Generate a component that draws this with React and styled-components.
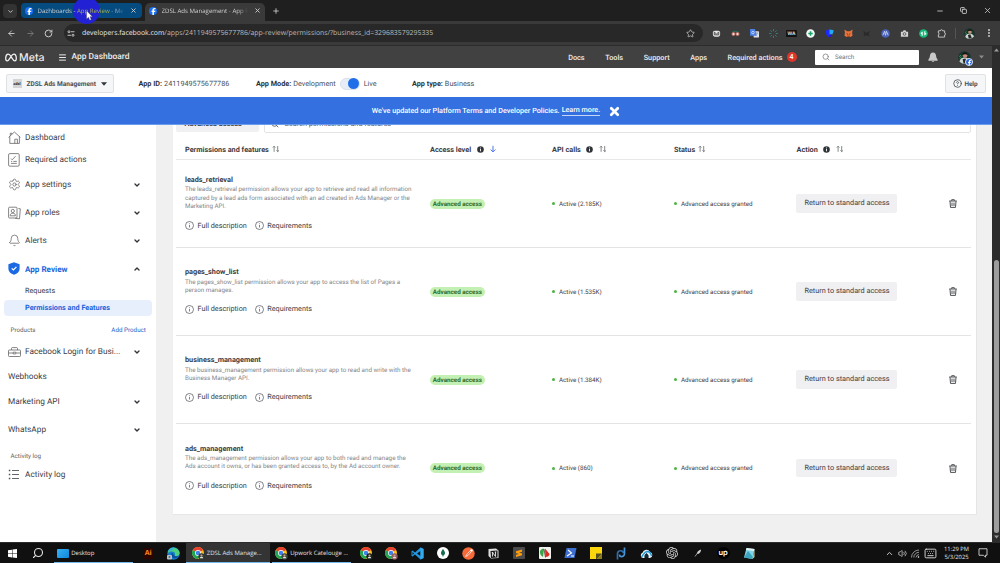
import React from 'react';
import styled, { createGlobalStyle, css } from 'styled-components';
import {
    ArrowLeft, ArrowRight, RotateCw, Star, Plus, X, Minus, Copy, Search, ChevronDown, ChevronUp,
    Volume2, Keyboard, CircleHelp, MoreVertical, Menu, Settings, Bell,
} from 'lucide-react';
import { SiOpenai } from 'react-icons/si';
import { FaFacebookF } from 'react-icons/fa6';

const permissions = [
    { name: 'leads_retrieval', text: 'The leads_retrieval permission allows your app to retrieve and read all information captured by a lead ads form associated with an ad created in Ads Manager or the Marketing API.', calls: '2.185K' },
    { name: 'pages_show_list', text: 'The pages_show_list permission allows your app to access the list of Pages a person manages.', calls: '1.535K' },
    { name: 'business_management', text: 'The business_management permission allows your app to read and write with the Business Manager API.', calls: '1.384K' },
    { name: 'ads_management', text: 'The ads_management permission allows your app to both read and manage the Ads account it owns, or has been granted access to, by the Ad account owner.', calls: '860' },
];

/* ---------- icons ---------- */

const MetaLogo = () => (
    <svg width="12" height="9" viewBox="0 0 24 17" fill="none" stroke="#f4f4f4" strokeWidth="2.5">
        <path d="M12 6.500C10 3 8.500 1.600 6.600 1.600 3.400 1.600 1.400 6 1.400 10.500c0 3 1.100 4.600 3.100 4.600 2.600 0 4.200-3.500 7.500-8.600 1.700-2.800 3.300-4.900 5.600-4.900 3 0 5 4.400 5 8.900 0 3-1.100 4.600-3.100 4.600-2.600 0-4.200-3.500-7.500-8.600z" />
    </svg>
);

const HomeIcon = () => (
    <svg width="13" height="13" viewBox="0 0 13 13" fill="none" stroke="#666" strokeWidth="0.8">
        <path d="M.6 6.400L6.400 1l6 5.400M1.800 5.400v7h9.600v-7M2.300 4.700V2.200h1.500v1.100M6.800 12.400V8.200h2.600v4.200" />
    </svg>
);

const ToolboxIcon = () => (
    <svg width="13" height="10" viewBox="0 0 13 10" fill="none" stroke="#666" strokeWidth="0.8">
        <rect x=".5" y="3" width="12" height="6.500" rx=".8" />
        <path d="M3.500 3V1.400c0-.5.300-.8.800-.8h4.400c.5 0 .8.300.8.800V3M.5 6h4.700M7.800 6h4.700M5.200 5.200h2.600v1.700H5.200z" />
    </svg>
);

const LogIcon = () => (
    <svg width="12" height="11" viewBox="0 0 12 11" fill="none" stroke="#555" strokeWidth="0.9">
        <path d="M4 1.500h7M4 5.500h7M4 9.500h7" />
        <path d="M.8 1.500h1.500M.8 5.500h1.500M.8 9.500h1.500" strokeWidth="1.400" />
    </svg>
);

const ChecklistIcon = () => (
    <svg width="12" height="14" viewBox="0 0 12 14" fill="none" stroke="#666" strokeWidth="0.8">
        <rect x="0.6" y="0.6" width="10.600" height="12.600" rx="1.200" />
        <path d="M3 5.600l1.200 1.200L7.600 3.200M3 8.400h1.200M5.400 8.400h3.400M3 10.400h5.800" />
    </svg>
);

const RolesIcon = () => (
    <svg width="13" height="14" viewBox="0 0 13 14" fill="none" stroke="#666" strokeWidth="0.8">
        <rect x="0.6" y="1.2" width="8.4" height="10.8" rx="1" />
        <circle cx="4.8" cy="5" r="1.6" />
        <path d="M2.2 9.8c0-1.8 1-2.600 2.600-2.600s2.600.8 2.600 2.600zM10.400 2.400l1.900.4-.8 10-4.400-.5" />
    </svg>
);

const ShieldIcon = () => (
    <svg width="12" height="13" viewBox="0 0 12 13">
        <path d="M6 .3l5.600 2v4.400c0 3-2.200 5-5.600 6.100C2.600 11.700.4 9.700.4 6.700V2.300z" fill="#1b6ae4" />
        <path d="M3.700 6.300l1.700 1.700 3-3.200" fill="none" stroke="#fff" strokeWidth="1.200" />
    </svg>
);

const SortIcon = () => (
    <svg width="8" height="8" viewBox="0 0 8 8" fill="none" stroke="#66696d" strokeWidth="0.8">
        <path d="M2.100 6.800V1.300M.8 2.500l1.300-1.300 1.300 1.300M5.700 1v5.600M4.400 5.400l1.300 1.300L7 5.400" />
    </svg>
);

const InfoDot = () => (
    <svg width="7" height="7" viewBox="0 0 7 7">
        <circle cx="3.500" cy="3.500" r="3.300" fill="#303338" />
        <path d="M3.500 3v2.300M3.500 1.500v.9" stroke="#fff" strokeWidth="0.9" />
    </svg>
);

const InfoRing = () => (
    <svg width="9" height="9" viewBox="0 0 9 9" fill="none" stroke="#4b4f56" strokeWidth="0.7">
        <circle cx="4.500" cy="4.500" r="4" />
        <path d="M4.500 4v2.500M4.500 2.400v.8" />
    </svg>
);

const DownArrow = () => (
    <svg width="6" height="8" viewBox="0 0 6 8" fill="none" stroke="#4a76e8" strokeWidth="1">
        <path d="M3 .8v6M.6 4.500L3 6.900l2.400-2.400" />
    </svg>
);

const TrashIcon = () => (
    <svg width="8" height="9" viewBox="0 0 8 9" fill="none" stroke="#3a3d41" strokeWidth="0.9">
        <path d="M.2 2h7.600M2.700 1.800V.7h2.600v1.100M1 2.200l.5 6.200h5L7 2.200M3 3.600v3.400M5 3.600v3.400" />
    </svg>
);

const Caret = ({ color, size = 7 }) => (
    <svg width={size} height="4" viewBox="0 0 7 4"><path d="M0 0h7L3.500 4z" fill={color} /></svg>
);

const BellSolid = () => (
    <svg width="10" height="10" viewBox="0 0 10 10">
        <path d="M5 .4c2 0 3 1.500 3.100 3.700.1 1.700.8 2.600 1.500 3.600v1H.4v-1c.7-1 1.400-1.900 1.500-3.600C2 1.900 3 .4 5 .4z" fill="#c9c9c9" />
        <path d="M3.600 9h2.800l-.6.8H4.200z" fill="#c9c9c9" />
    </svg>
);

const Portrait = ({ size }) => (
    <svg width={size} height={size} viewBox="0 0 14 14">
        <circle cx="7" cy="7" r="6.800" fill="#17352a" />
        <path d="M1.500 11c1-3 3-4 5.500-4s5 1.500 5.800 3.500C11 13 9 13.800 7 13.800S3 13 1.500 11z" fill="#c9d6d0" />
        <path d="M5 9l3-1 2 5-4 .5z" fill="#2a2527" />
        <circle cx="7.600" cy="4.800" r="2.500" fill="#c48b76" />
        <path d="M4.800 4.600C4.800 2 6.400 1.400 8 1.600s2.500 1.400 2.100 2.800C8.600 3.300 6.600 3.300 4.800 4.600z" fill="#1a1314" />
        <path d="M1.500 6.200l1.500-2M2 8.200l1.600-2" stroke="#35b56f" strokeWidth="0.9" />
    </svg>
);

const ChromeIcon = ({ badge }) => (
    <svg width="13" height="13" viewBox="0 0 26 26">
        <circle cx="12" cy="12" r="12" fill="#fbc116" />
        <path d="M1.600 6A12 12 0 0 0 12 24l5.200-9L12 12z" fill="#21a456" />
        <path d="M12 12L1.600 6A12 12 0 0 1 22.400 6L17 9z" fill="#e8402f" />
        <circle cx="12" cy="12" r="5.800" fill="#fff" />
        <circle cx="12" cy="12" r="4.500" fill="#3f80ec" />
        <circle cx="19" cy="19" r="6.300" fill={badge} />
        <circle cx="19" cy="17" r="2.200" fill="#c99a87" />
        <path d="M15.500 22.500c.5-2.500 2-3 3.500-3s3 .5 3.500 3z" fill="#e9e4e2" />
    </svg>
);

const EdgeIcon = () => (
    <svg width="13" height="13" viewBox="0 0 26 26">
        <circle cx="13" cy="13" r="12.500" fill="#1580cf" />
        <path d="M2 9C5-1 21-2 25 10c1 5-2 8-6 8-3 0-4-1-3-3 1-4-3-7-7-6-3 0-5 1-7 3z" fill="#4dcf7e" />
        <path d="M2 9C4 2 10 0 15 1c-2 5-7 7-13 8z" fill="#38b6d6" />
        <path d="M10 11c-3 4-1 10 5 12 4 0 7-2 9-5-4 2-9 1-11-3z" fill="#0c4f9c" />
        <rect x="0" y="16" width="10" height="9" rx="2" fill="#b9c2c9" />
        <circle cx="5" cy="20" r="2" fill="#5e6a74" />
    </svg>
);

const WindowsIcon = () => (
    <svg width="9" height="9" viewBox="0 0 18 18" fill="#fff">
        <path d="M0 2.500L8 1.400v7.200H0zM9 1.200L18 0v8.600H9zM0 9.600h8v7.200L0 15.700zM9 9.600h9V18l-9-1.200z" />
    </svg>
);

const VscodeIcon = () => (
    <svg width="13" height="13" viewBox="0 0 26 26">
        <path d="M19 1l6 3v18l-6 3L8 15l-5 4-2-1.500v-9L3 7l5 4z" fill="#2196dd" />
        <path d="M19 8v10l-7-5zM3 10v6l3-3z" fill="#101010" />
        <path d="M19 1l6 3v18l-6 3z" fill="#35a9ef" />
    </svg>
);

const MongoIcon = () => (
    <svg width="12" height="12" viewBox="0 0 24 24">
        <circle cx="12" cy="12" r="12" fill="#fff" />
        <path d="M12 4c3 4 4 6 4 8 0 3-2 4-3.500 5.500V20h-1v-2.500C10 16 8 15 8 12c0-2 1-4 4-8z" fill="#156b4c" />
    </svg>
);

const PostmanIcon = () => (
    <svg width="13" height="13" viewBox="0 0 26 26">
        <circle cx="13" cy="13" r="12.500" fill="#f76b3b" />
        <path d="M7 19l4-6 7-7M7 19l5-2 7-8" stroke="#fff" strokeWidth="1.400" fill="none" />
        <circle cx="19" cy="7" r="2.400" fill="#fff" />
    </svg>
);

const NotionIcon = () => (
    <svg width="11" height="11" viewBox="0 0 22 22">
        <path d="M1 2l15-1 5 4v15L6 21l-5-5z" fill="#dedede" />
        <path d="M5 6l14-1v14L6 20z" fill="#1b1b1b" />
        <path d="M9 17V9l6 8V8M7.500 9h3M13.500 8h3" stroke="#e8e8e8" strokeWidth="1.800" fill="none" />
    </svg>
);

const SublimeIcon = () => (
    <svg width="12" height="12" viewBox="0 0 24 24">
        <rect width="24" height="24" rx="2" fill="#4b4b4b" />
        <path d="M6 8.500L18 5v4.500L12 11l6 2v3.500L6 20v-4.500L12 14l-6-2z" fill="#ff9d0b" />
    </svg>
);

const LeafIcon = () => (
    <svg width="12" height="12" viewBox="0 0 24 24">
        <rect width="24" height="24" rx="2" fill="#f1f1ee" />
        <path d="M2 8C5 3 9 3 10 4L8 20C3 17 1 12 2 8z" fill="#39a548" />
        <path d="M12 3l9 11c0 4-4 6-8 6z" fill="#dc2b22" />
        <path d="M10 4l3 17" stroke="#4b2a1b" strokeWidth="1.500" />
    </svg>
);

const PowershellIcon = () => (
    <svg width="13" height="12" viewBox="0 0 26 24">
        <path d="M5 2h20l-4 20H1z" fill="#3d6fd0" />
        <path d="M8 6l7 6-9 6M14 18h6" stroke="#fff" strokeWidth="2.200" fill="none" />
    </svg>
);

const StickyIcon = () => (
    <svg width="12" height="12" viewBox="0 0 24 24">
        <rect width="24" height="24" fill="#fbd60c" />
        <path d="M12 13h12L14 24h-2z" fill="#54501f" />
        <path d="M24 13v11H14z" fill="#8a7c1c" />
    </svg>
);

const LoopIcon = () => (
    <svg width="10" height="13" viewBox="0 0 20 26" fill="none" strokeWidth="3.400">
        <path d="M3 25V13a6 6 0 0 1 6-5.500c4 0 6 2.500 6 5" stroke="#2e6eae" />
        <path d="M17 1v12c0 4-3 6.500-7 6-2-.2-3-2-3-4" stroke="#4994d6" />
    </svg>
);

const CloudIcon = () => (
    <svg width="13" height="11" viewBox="0 0 26 22">
        <path d="M6 20a5.500 5.500 0 0 1-1-10.500A8 8 0 0 1 20 8a6.200 6.200 0 0 1 0 12h-3v-5l-4-5-4 5v5z" fill="#dff1fb" />
        <path d="M3 18c4-4 5-10 11-11 5 0 8 4 9 9" stroke="#2299d5" strokeWidth="2.800" fill="none" />
        <circle cx="13" cy="16" r="3.500" fill="#0e2c44" />
    </svg>
);

const FeatherIcon = () => (
    <svg width="8" height="8" viewBox="0 0 16 16">
        <path d="M2 15l5-7" stroke="#999" strokeWidth="2" />
        <path d="M6 9c0-4 3-6 8-8 0 4-2 8-6 9z" fill="#d5d5d5" />
    </svg>
);

const NotepadIcon = () => (
    <svg width="12" height="13" viewBox="0 0 24 26">
        <path d="M7 2l16 2-4 20-17-3z" fill="#7ed4e6" />
        <path d="M7 2l16 2-1 4L6 6z" fill="#e7f1f2" />
        <path d="M2 21l8-13 10 12-1 4z" fill="#3aa3bd" />
        <path d="M19 24l4-20v16z" fill="#dcc98f" />
    </svg>
);

const SignalIcon = () => (
    <svg width="9" height="9" viewBox="0 0 18 18" fill="none" stroke="#bdbdbd" strokeWidth="1.500">
        <path d="M1 17A15 15 0 0 1 16 2M5.500 17A11 11 0 0 1 16 6.500M10 17a7 7 0 0 1 6-6" />
        <circle cx="15" cy="16" r="1.500" fill="#fff" stroke="none" />
    </svg>
);

const NotificationIcon = () => (
    <svg width="10" height="10" viewBox="0 0 20 20" fill="none" stroke="#e0e0e0" strokeWidth="1.700">
        <path d="M2 1.500h16v13h-3v4l-4-4H2z" />
    </svg>
);

const PointerIcon = styled.svg`
    position: absolute;
    left: 65px;
    top: 7px;
    z-index: 4;
`;

/* browser extension buttons, drawn on a 20 x 20 grid */
const extensions = [
    <g key="mail"><rect x="2" y="4" width="16" height="13" rx="4" fill="#e8e8e8" /><path d="M5 7l5 4 5-4v6H5z" fill="none" stroke="#444" strokeWidth="2" /></g>,
    <g key="glasses"><path d="M2 7c2-4 14-4 16 0l-2 1H4z" fill="#2b6256" /><circle cx="5.500" cy="11" r="3.500" fill="#e9dfd9" stroke="#c9655c" strokeWidth="1.800" /><circle cx="14.500" cy="11" r="3.500" fill="#e9dfd9" stroke="#c9655c" strokeWidth="1.800" /></g>,
    <g key="translate"><rect x="8" y="5" width="12" height="14" rx="1" fill="#dcdfe6" /><path d="M0 0h11l4 15H0z" fill="#4a7fe6" /><circle cx="6.500" cy="8" r="2.800" fill="none" stroke="#fff" strokeWidth="1.400" /><path d="M13 9h5M15.500 8c1 3-1 5-2 6" stroke="#5a6a88" fill="none" /></g>,
    <g key="spark" stroke="#2c8c88" strokeWidth="1.800"><path d="M10 0v5M10 15v5M0 10h5M15 10h5M3 3l3.500 3.500M13.500 13.500L17 17M17 3l-3.500 3.500M3 17l3.500-3.500" /></g>,
    <g key="wa"><rect x="-2" y="2" width="24" height="16" rx="1" fill="#121212" /><text x="10" y="14" textAnchor="middle" fontSize="11" fontWeight="700" fontFamily="Liberation Sans, sans-serif" fill="#ddd">WA</text></g>,
    <g key="plus"><circle cx="10" cy="10" r="9.500" fill="#f3fbf7" /><path d="M10 5v10M5 10h10" stroke="#16a268" strokeWidth="3.500" /></g>,
    <g key="shield"><path d="M1 2c4 2 5-1 9-1v18C3 15 1 10 1 2z" fill="#1c2bff" /><path d="M10 1c4 0 5 2 9 1 0 4-1 7-3 10h-6z" fill="#25a9f0" /><path d="M10 12h6c-1 3-3 5-6 7z" fill="#2b12d8" /></g>,
    <g key="fox"><path d="M1 1l6 4h6l6-4-1 8 1 6-5 3H6l-5-3 1-6z" fill="#e8743b" /><path d="M6 10l3 2M14 10l-3 2M7 16h6" stroke="#6b2f1b" strokeWidth="2" /></g>,
    <g key="x"><path d="M3 4l5 4h4l5-4-2 8 2 4-7-2-7 2 2-4z" fill="#2a2a2b" /></g>,
    <g key="m"><circle cx="10" cy="10" r="9.500" fill="#4a62b8" /><path d="M4 14L8 5l2 9 2-9 4 9" stroke="#c8d0ee" strokeWidth="2" fill="none" /></g>,
    <g key="camera"><path d="M2 6h4l2-3h4l2 3h4v11H2z" fill="#d3d3d3" /><circle cx="10" cy="11" r="3" fill="none" stroke="#555" strokeWidth="2" /></g>,
    <g key="green"><circle cx="10" cy="10" r="9.700" fill="#18b77c" /><path d="M7 15V8l-3 2M13 5v7l3-2" stroke="#fff" strokeWidth="2.500" fill="none" /></g>,
    <g key="puzzle"><path d="M3 4h4.500a2.500 2.500 0 0 1 5 0H17v5a2 2 0 0 1 0 4v5H3v-5a2 2 0 0 0 0-4z" fill="none" stroke="#d4d4d4" strokeWidth="1.900" /></g>,
];

const navItems = [
    { label: 'Dashboard', icon: <HomeIcon />, h: 22 },
    { label: 'Required actions', icon: <ChecklistIcon />, h: 22 },
    { label: 'App settings', icon: <Settings size={13} strokeWidth={1.4} color="#666" />, h: 28, arrow: 'down' },
    { label: 'App roles', icon: <RolesIcon />, h: 28, arrow: 'down' },
    { label: 'Alerts', icon: <Bell size={13} strokeWidth={1.4} color="#666" />, h: 28, arrow: 'down' },
    { label: 'App Review', icon: <ShieldIcon />, h: 28, arrow: 'up', active: true },
];

const productItems = [
    { label: 'Facebook Login for Busi...', icon: <ToolboxIcon />, h: 22, arrow: 'down' },
    { label: 'Webhooks', h: 28 },
    { label: 'Marketing API', h: 22, arrow: 'down' },
    { label: 'WhatsApp', h: 34, arrow: 'down' },
];

const SideLink = ({ item }) => (
    <SideItem $h={item.h} $active={item.active}>
        {item.icon && <SideIcon>{item.icon}</SideIcon>}
        <span>{item.label}</span>
        {item.arrow && (
            <SideArrow>
                {item.arrow === 'up'
                    ? <ChevronUp size={8} strokeWidth={4} />
                    : <ChevronDown size={8} strokeWidth={4} />}
            </SideArrow>
        )}
    </SideItem>
);

const App = () => {
    return (
        <>
            <GlobalStyle />
            <Screen>
                <TabBar>
                    <TabSearch><ChevronDown size={7} strokeWidth={3} /></TabSearch>
                    <Tab $hovered>
                        <PointerHalo />
                        <Favicon><FaFacebookF size={7} /></Favicon>
                        <TabTitle>Dazhboards - <Tinted>App Review</Tinted> - Me</TabTitle>
                        <X size={7} strokeWidth={3} />
                        <PointerIcon width="7" height="11" viewBox="0 0 12 18">
                            <path d="M1 1v14l3.300-3 2.200 5 2.500-1-2.200-5H11z" fill="#fff" stroke="#444" strokeWidth="0.6" />
                        </PointerIcon>
                    </Tab>
                    <Tab>
                        <Favicon><FaFacebookF size={7} /></Favicon>
                        <TabTitle>ZDSL Ads Management - App R</TabTitle>
                        <X size={7} strokeWidth={3} />
                    </Tab>
                    <NewTab><Plus size={8} strokeWidth={2.500} /></NewTab>
                    <WindowControls>
                        <Minus size={8} strokeWidth={2.500} />
                        <Copy size={7} strokeWidth={3} />
                        <X size={9} strokeWidth={2} />
                    </WindowControls>
                </TabBar>
                <Toolbar>
                    <NavButtons>
                        <ArrowLeft size={9} strokeWidth={2.400} color="#ccc" />
                        <ArrowRight size={9} strokeWidth={2.400} color="#777" />
                        <RotateCw size={9} strokeWidth={2.600} color="#ccc" />
                    </NavButtons>
                    <UrlBar>
                        <svg width="8" height="7" viewBox="0 0 16 14" fill="none" stroke="#cfcfcf" strokeWidth="1.800">
                            <circle cx="4" cy="3.500" r="2" /><path d="M8 3.500h7M1 10.500h7" /><circle cx="12" cy="10.500" r="2" />
                        </svg>
                        <UrlText><b>developers.facebook.com</b>/apps/2411949575677786/app-review/permissions/?business_id=329683579295335</UrlText>
                        <Star size={9} strokeWidth={2.200} />
                    </UrlBar>
                    <Extensions>
                        {extensions.map((art) => (
                            <svg key={art.key} width="9" height="9" viewBox="0 0 20 20" overflow="visible">{art}</svg>
                        ))}
                    </Extensions>
                    <ProfileArea>
                        <Portrait size={11} />
                        <MoreVertical size={10} strokeWidth={3} color="#c8c8c8" />
                    </ProfileArea>
                </Toolbar>

                <Viewport>
                    <Site>
                        <Header>
                            <MetaLogo />
                            <Brand>Meta</Brand>
                            <Menu size={9} strokeWidth={2.600} />
                            <HeaderTitle>App Dashboard</HeaderTitle>
                            <HeaderNav>
                                <span>Docs</span>
                                <span>Tools</span>
                                <span>Support</span>
                                <span>Apps</span>
                                <span>Required actions</span>
                            </HeaderNav>
                            <CountBadge>4</CountBadge>
                            <SearchBox><Search size={8} strokeWidth={2.200} />Search</SearchBox>
                            <BellSolid />
                            <Account>
                                <Portrait size={13} />
                                <AccountBadge><FaFacebookF size={5} /></AccountBadge>
                            </Account>
                            <Caret color="#8b8b8b" size={5} />
                        </Header>

                        <AppBar>
                            <AppPicker>
                                <AppThumb>zdsl</AppThumb>
                                ZDSL Ads Management
                                <Caret color="#303338" size={6} />
                            </AppPicker>
                            <AppFact $w={117.500}><b>App ID:</b> 2411949575677786</AppFact>
                            <AppFact $w={156}>
                                <b>App Mode:</b> Development
                                <Toggle><ToggleKnob /></Toggle>
                                Live
                            </AppFact>
                            <AppFact $w={70}><b>App type:</b> Business</AppFact>
                            <HelpButton><CircleHelp size={9} strokeWidth={2.200} />Help</HelpButton>
                        </AppBar>

                        <Banner>
                            <span>We've updated our Platform Terms and Developer Policies.</span>
                            <BannerLink>Learn more.</BannerLink>
                            <X size={13} strokeWidth={5} />
                        </Banner>

                        <Body>
                            <Sidebar>
                                {navItems.map((item) => <SideLink key={item.label} item={item} />)}
                                <SubItem>Requests</SubItem>
                                <SubItem $selected>Permissions and Features</SubItem>
                                <SideCaption $h={22}>Products<CaptionLink>Add Product</CaptionLink></SideCaption>
                                {productItems.map((item) => <SideLink key={item.label} item={item} />)}
                                <SideCaption $h={18}>Activity log</SideCaption>
                                <SideLink item={{ label: 'Activity log', icon: <LogIcon />, h: 20 }} />
                            </Sidebar>

                            <Main>
                                <Card>
                                    <FilterRow>
                                        <FilterButton>Advanced access</FilterButton>
                                        <FilterInput><Search size={8} strokeWidth={2.500} />Search permissions and features</FilterInput>
                                    </FilterRow>
                                    <TableHead>
                                        <HeadCell>Permissions and features <SortIcon /></HeadCell>
                                        <HeadCell $gap={6}>Access level <InfoDot /> <DownArrow /></HeadCell>
                                        <HeadCell $gap={5.500}>API calls <InfoDot /> <SortIcon /></HeadCell>
                                        <HeadCell>Status <SortIcon /></HeadCell>
                                        <HeadCell $gap={5.500}>Action <InfoDot /> <SortIcon /></HeadCell>
                                    </TableHead>
                                    {permissions.map((p) => (
                                        <TableRow key={p.name}>
                                            <Permission>
                                                <PermissionName>{p.name}</PermissionName>
                                                <PermissionText>{p.text}</PermissionText>
                                                <PermissionLinks>
                                                    <InfoRing /><span>Full description</span>
                                                    <InfoRing /><span>Requirements</span>
                                                </PermissionLinks>
                                            </Permission>
                                            <AccessBadge>Advanced access</AccessBadge>
                                            <StatusText>Active ({p.calls})</StatusText>
                                            <StatusText>Advanced access granted</StatusText>
                                            <ActionCell>
                                                <ReturnButton>Return to standard access</ReturnButton>
                                                <TrashIcon />
                                            </ActionCell>
                                        </TableRow>
                                    ))}
                                </Card>
                            </Main>
                        </Body>
                    </Site>
                    <Scrollbar>
                        <svg width="5" height="4" viewBox="0 0 7 4"><path d="M0 4h7L3.500 0z" fill="#9a9a9a" /></svg>
                        <ScrollThumb />
                        <Caret color="#9a9a9a" size={5} />
                    </Scrollbar>
                </Viewport>

                <Taskbar>
                    <TaskSlot $w={25}><WindowsIcon /></TaskSlot>
                    <TaskSlot $w={25}><Flipped><Search size={12} strokeWidth={2.200} /></Flipped></TaskSlot>
                    <TaskWindow $w={79} $ml={4}><DesktopTile />Desktop</TaskWindow>
                    <TaskSlot $w={25.500} $ml={2.500}><AiTile>Ai</AiTile></TaskSlot>
                    <TaskSlot $w={25}><EdgeIcon /></TaskSlot>
                    <TaskWindow $w={84} $active><ChromeIcon badge="#2c3b34" />ZDSL Ads Manage...</TaskWindow>
                    <TaskWindow $w={79} $ml={2}><ChromeIcon badge="#3b4a42" />Upwork Catelouge ...</TaskWindow>
                    <PinnedApps>
                        <ChromeIcon badge="#16241c" />
                        <ChromeIcon badge="#8d5f64" />
                        <VscodeIcon />
                        <MongoIcon />
                        <PostmanIcon />
                        <NotionIcon />
                        <SublimeIcon />
                        <LeafIcon />
                        <PowershellIcon />
                        <StickyIcon />
                        <LoopIcon />
                        <CloudIcon />
                        <SiOpenai size={12} color="#d6d6d6" />
                        <FeatherIcon />
                        <UpTile>up</UpTile>
                        <NotepadIcon />
                    </PinnedApps>
                    <Tray>
                        <ChevronUp size={9} strokeWidth={2.500} />
                        <Volume2 size={9} strokeWidth={2} />
                        <SignalIcon />
                        <Keyboard size={13} strokeWidth={1.800} />
                    </Tray>
                    <Clock>11:29 PM<br />5/3/2025</Clock>
                    <NotificationIcon />
                </Taskbar>
            </Screen>
        </>
    );
};

export default App;

const GlobalStyle = createGlobalStyle`
    * { box-sizing: border-box; }
    body {
        margin: 0;
        overflow: hidden;
        font-family: Roboto, "Liberation Sans", sans-serif;
        text-rendering: geometricPrecision;
    }
    svg { display: block; flex: none; }
`;

const Screen = styled.div`
    display: flex;
    flex-direction: column;
    width: 1000px;
    height: 563px;
    overflow: hidden;
    white-space: nowrap;
`;

const TabBar = styled.div`
    display: flex;
    align-items: flex-end;
    height: 21px;
    padding-left: 3px;
    background: #1f1f1f;
    color: #d0d0d0;
    font-family: "Open Sans", sans-serif;
    font-size: 6.1px;
`;

const TabSearch = styled.div`
    display: grid;
    place-items: center;
    width: 14px;
    height: 14px;
    margin: 0 4px 3px 0;
    border-radius: 4px;
    background: #333;
`;

const Tab = styled.div`
    position: relative;
    display: flex;
    align-items: center;
    width: ${({ $hovered }) => ($hovered ? '121px' : '120px')};
    height: ${({ $hovered }) => ($hovered ? '15px' : '18px')};
    margin: ${({ $hovered }) => ($hovered ? '0 3px 3px 0' : '0')};
    padding: ${({ $hovered }) => ($hovered ? '0 5px 0 4px' : '0 4px 3px')};
    border-radius: ${({ $hovered }) => ($hovered ? '4px' : '5px 5px 0 0')};
    background: ${({ $hovered }) => ($hovered ? '#064b80' : '#3a3a3a')};
`;

const PointerHalo = styled.div`
    position: absolute;
    left: 52px;
    top: -6px;
    width: 27px;
    height: 27px;
    border-radius: 50%;
    background: #2222d4;
`;

const Favicon = styled.span`
    display: flex;
    align-items: flex-end;
    justify-content: center;
    width: 8px;
    height: 8px;
    margin-right: 4.5px;
    overflow: hidden;
    border-radius: 50%;
    background: #1c6ff2;
    color: #fff;
`;

const TabTitle = styled.span`
    position: relative;
    flex: none;
    width: 86px;
    margin-right: 6px;
    overflow: hidden;
    mask-image: linear-gradient(to right, #000 88%, transparent);
`;

const Tinted = styled.span`
    color: #a3b14a;
`;

const NewTab = styled.div`
    margin: 0 0 6px 7px;
`;

const WindowControls = styled.div`
    display: flex;
    align-items: center;
    gap: 16px;
    margin: 0 8px 6px auto;
`;

const Toolbar = styled.div`
    display: flex;
    align-items: center;
    height: 24px;
    padding-left: 7px;
    background: #3a3a3a;
`;

const NavButtons = styled.div`
    display: flex;
    gap: 9.5px;
    width: 57px;
`;

const UrlBar = styled.div`
    display: flex;
    align-items: center;
    width: 639px;
    height: 18px;
    padding: 0 8px 0 3px;
    border-radius: 9px;
    background: #282828;
    color: #bcbcbc;
    font-family: "Open Sans", sans-serif;
    font-size: 6.9px;
`;

const UrlText = styled.span`
    flex: 1;
    margin-left: 7px;
    b {
        color: #e8e8e8;
        font-weight: 400;
    }
`;

const Extensions = styled.div`
    display: grid;
    grid-template-columns: repeat(13, 18.75px);
    place-items: center;
    margin-left: 4.5px;
`;

const ProfileArea = styled.div`
    display: flex;
    align-items: center;
    gap: 9px;
    margin-left: 4px;
    padding-left: 8px;
    border-left: 1px solid #555;
`;

const Viewport = styled.div`
    display: flex;
    flex: 1;
    min-height: 0;
`;

const Site = styled.div`
    display: flex;
    flex-direction: column;
    width: 992px;
`;

const Header = styled.header`
    display: flex;
    align-items: center;
    flex: none;
    height: 23.4px;
    padding: 0 7px 0 5px;
    border-top: 1px solid #2c2c2c;
    background: #414141;
    color: #ececec;
    font-size: 7.3px;
    font-weight: 500;
`;

const Brand = styled.span`
    width: 38.5px;
    margin-left: 2px;
    font-family: Inter, sans-serif;
    font-size: 10.6px;
    font-weight: 500;
`;

const HeaderTitle = styled.span`
    margin-left: 5px;
    font-size: 8.45px;
`;

const HeaderNav = styled.nav`
    display: flex;
    gap: 20.6px;
    margin-left: auto;
`;

const CountBadge = styled.span`
    width: 10px;
    margin: 0 18.5px 0 4px;
    border-radius: 5px;
    background: #e0352b;
    color: #fff;
    font-size: 7px;
    line-height: 10px;
    text-align: center;
`;

const SearchBox = styled.div`
    display: flex;
    align-items: center;
    gap: 5px;
    width: 104px;
    height: 15px;
    margin-right: 9px;
    padding-left: 7px;
    border-radius: 1px;
    background: #fff;
    color: #777;
    font-size: 6.3px;
    font-weight: 400;
`;

const Account = styled.div`
    position: relative;
    margin: 0 8px 0 20px;
    & + svg { margin-right: 1px; }
`;

const AccountBadge = styled.span`
    position: absolute;
    right: -2px;
    bottom: -2px;
    display: flex;
    align-items: flex-end;
    justify-content: center;
    width: 8px;
    height: 8px;
    border: 1px solid #dfe6f5;
    border-radius: 50%;
    background: #2464d8;
    color: #fff;
`;

const AppBar = styled.div`
    display: flex;
    align-items: center;
    flex: none;
    height: 29px;
    padding: 1.6px 6px 0;
    background: #fff;
    color: #4b4f56;
    font-size: 7.25px;
`;

const AppPicker = styled.div`
    display: flex;
    align-items: center;
    gap: 5px;
    width: 108px;
    height: 19px;
    margin-right: 24.5px;
    padding-left: 5.5px;
    border: 1px solid #dfe1e5;
    border-radius: 2px;
    background: #f5f6f7;
    font-size: 6.57px;
    font-weight: 700;
`;

const AppThumb = styled.span`
    width: 9px;
    height: 9px;
    background: #d4d4d4;
    color: #222;
    font-size: 4px;
    line-height: 9px;
    text-align: center;
`;

const AppFact = styled.div`
    display: flex;
    align-items: center;
    gap: 2px;
    width: ${({ $w }) => $w}px;
    b { color: #303338; }
`;

const Toggle = styled.span`
    display: flex;
    justify-content: flex-end;
    width: 20px;
    height: 12px;
    margin: 0 2px 0 2px;
    border: 1px solid #dbe2ec;
    border-radius: 6px;
    background: #e7edf6;
`;

const ToggleKnob = styled.span`
    width: 11px;
    height: 11px;
    margin-top: -0.5px;
    border-radius: 50%;
    background: #1f70e8;
`;

const HelpButton = styled.div`
    display: flex;
    align-items: center;
    justify-content: center;
    gap: 2px;
    width: 41px;
    height: 19px;
    margin-left: auto;
    border: 1px solid #e1e2e5;
    border-radius: 2px;
    background: #f5f6f7;
    font-size: 6.4px;
    font-weight: 700;
`;

const Banner = styled.div`
    position: relative;
    z-index: 1;
    display: flex;
    align-items: center;
    justify-content: center;
    flex: none;
    height: 27.6px;
    border-bottom: 1px solid #6c9aec;
    background: #3570e0;
    color: #fff;
    font-size: 7.2px;
    font-weight: 500;
    svg { margin: 1px -1px 0 8px; }
`;

const BannerLink = styled.span`
    margin-left: 2px;
    border-bottom: 1px solid #c4d6f7;
    line-height: 10px;
`;

const Body = styled.div`
    display: flex;
    flex: 1;
    min-height: 0;
    overflow: hidden;
    background: #f0f0f0;
`;

const Sidebar = styled.aside`
    flex: none;
    width: 156.4px;
    padding: 1.7px 4px 0 8px;
    background: #fff;
    color: #3d4045;
`;

const SideItem = styled.div`
    display: flex;
    align-items: center;
    height: ${({ $h }) => $h}px;
    font-size: 8.28px;
    ${({ $active }) => $active && css`
        color: #1b64dc;
        font-size: 8.1px;
        font-weight: 700;
    `}
`;

const SideIcon = styled.span`
    width: 17px;
`;

const SideArrow = styled.span`
    margin: 0 11.5px 0 auto;
    color: #303338;
`;

const SubItem = styled.div`
    height: 16px;
    margin: ${({ $selected }) => ($selected ? '1.6px 0 2.4px -4px' : '0')};
    padding-left: ${({ $selected }) => ($selected ? '21px' : '17px')};
    border-radius: 4px;
    background: ${({ $selected }) => ($selected ? '#e8effc' : 'none')};
    color: ${({ $selected }) => ($selected ? '#1b64dc' : 'inherit')};
    font-size: 7.28px;
    font-weight: ${({ $selected }) => ($selected ? 700 : 400)};
    line-height: 16px;
`;

const SideCaption = styled.div`
    display: flex;
    align-items: center;
    justify-content: space-between;
    height: ${({ $h }) => $h}px;
    padding: 0 6.5px 0 2.5px;
    color: #606368;
    font-size: 6.25px;
`;

const CaptionLink = styled.span`
    color: #2d62c4;
`;

const Main = styled.main`
    flex: 1;
    padding: 0 15px 0 16.6px;
`;

const Card = styled.section`
    display: flow-root;
    height: 390px;
    padding: 0 5px 0 3.5px;
    border: solid #e6e6e6;
    border-width: 0 1px 1px 0;
    background: #fff;
    color: #3d4045;
`;

/* scrolled partly under the banner */
const FilterRow = styled.div`
    display: flex;
    gap: 5px;
    height: 19px;
    margin-top: -12px;
`;

const FilterButton = styled.div`
    width: 83px;
    padding: 1.5px 0 0 8px;
    border-radius: 2px;
    background: #f0f0f2;
    font-size: 7.3px;
    font-weight: 700;
    line-height: 19px;
`;

const FilterInput = styled.div`
    display: flex;
    align-items: center;
    gap: 5px;
    flex: 1;
    height: 20px;
    padding: 2px 0 0 6px;
    border: 1px solid #e3e4e6;
    border-radius: 2px;
    color: #55585d;
    font-size: 7.3px;
`;

const tableColumns = css`
    display: grid;
    grid-template-columns: 245px 122px 122px 122.5px 1fr;
    align-items: center;
    padding-left: 8.5px;
`;

const TableHead = styled.div`
    ${tableColumns}
    height: 28px;
    padding-top: 8px;
    border-bottom: 1px solid #e8e8e8;
    font-size: 7.3px;
    font-weight: 700;
`;

const HeadCell = styled.div`
    display: flex;
    align-items: center;
    gap: ${({ $gap = 3.2 }) => $gap}px;
`;

const TableRow = styled.div`
    ${tableColumns}
    height: 88px;
    padding-top: 0.4px;
    border-bottom: 1px solid #e4e4e4;
    &:last-child { border-bottom: 0; }
`;

const Permission = styled.div`
    padding-bottom: 2px;
`;

const PermissionName = styled.div`
    font-size: 7.3px;
    font-weight: 700;
    line-height: 10px;
`;

const PermissionText = styled.p`
    width: 230px;
    margin: 0.5px 0 10px;
    color: #85878b;
    font-size: 6.25px;
    line-height: 8.4px;
    white-space: normal;
`;

const PermissionLinks = styled.div`
    display: flex;
    align-items: center;
    height: 10px;
    font-size: 7.25px;
    line-height: 10px;
    span { margin: 0 8px 0 3.5px; }
`;

const AccessBadge = styled.span`
    justify-self: start;
    padding: 0 2.8px;
    border-radius: 5px;
    background: #c5f0b4;
    color: #2f6b2b;
    font-size: 6.28px;
    font-weight: 700;
    line-height: 10px;
`;

const StatusText = styled.span`
    display: flex;
    align-items: center;
    font-size: 6.26px;
    &::before {
        content: '';
        width: 3px;
        height: 3px;
        margin-right: 4px;
        border-radius: 50%;
        background: #4bb543;
    }
`;

const ActionCell = styled.div`
    display: flex;
    align-items: center;
    justify-content: space-between;
    padding-right: 14px;
`;

const ReturnButton = styled.div`
    width: 101px;
    height: 18.5px;
    border-radius: 2px;
    background: #f0eff1;
    font-size: 7.3px;
    line-height: 18.5px;
    text-align: center;
`;

const Scrollbar = styled.div`
    display: flex;
    flex-direction: column;
    align-items: center;
    justify-content: space-between;
    width: 8px;
    padding: 3px 0;
    background: #2c2c2c;
`;

const ScrollThumb = styled.div`
    width: 5px;
    height: 273px;
    margin: auto 0 2px;
    border-radius: 3px;
    background: #9d9d9d;
`;

const Taskbar = styled.footer`
    display: flex;
    align-items: center;
    flex: none;
    height: 21px;
    border-top: 1px solid #2b2b2b;
    background: #101010;
    color: #e4e4e4;
    font-family: "Open Sans", sans-serif;
    font-size: 6.03px;
`;

const TaskSlot = styled.div`
    display: grid;
    place-items: center;
    width: ${({ $w }) => $w}px;
    margin-left: ${({ $ml = 0 }) => $ml}px;
`;

const Flipped = styled.span`
    transform: scaleX(-1);
`;

const TaskWindow = styled.div`
    display: flex;
    align-items: center;
    gap: 2.2px;
    width: ${({ $w }) => $w}px;
    height: 100%;
    margin-left: ${({ $ml = 0 }) => $ml}px;
    padding: 1px 0 0 ${({ $active }) => ($active ? 5.5 : 3)}px;
    border-bottom: 1px solid #76b9ed;
    background: ${({ $active }) => ($active ? '#343434' : 'none')};
`;

const DesktopTile = styled.span`
    width: 12px;
    height: 9px;
    border-radius: 1px;
    background: linear-gradient(135deg, #35b2f5, #1186dc);
`;

const AiTile = styled.span`
    width: 11px;
    border-radius: 2px;
    background: #2d0500;
    color: #ff8a1c;
    font-size: 7px;
    font-weight: 700;
    line-height: 11px;
    text-align: center;
`;

const PinnedApps = styled.div`
    display: grid;
    grid-template-columns: repeat(16, 25.5px);
    place-items: center;
    margin-left: 2.3px;
`;

const UpTile = styled.span`
    width: 13px;
    border-radius: 50%;
    background: #000;
    color: #fff;
    font-family: Inter, sans-serif;
    font-size: 7.5px;
    font-weight: 600;
    line-height: 12px;
    text-align: center;
`;

const Tray = styled.div`
    display: flex;
    align-items: center;
    gap: 4px;
    margin-left: auto;
    color: #d4d4d4;
`;

const Clock = styled.div`
    width: 25px;
    margin: 0 9px 0 7px;
    font-size: 5.8px;
    line-height: 8.5px;
    text-align: center;
    & + svg { margin-right: 12px; }
`;
